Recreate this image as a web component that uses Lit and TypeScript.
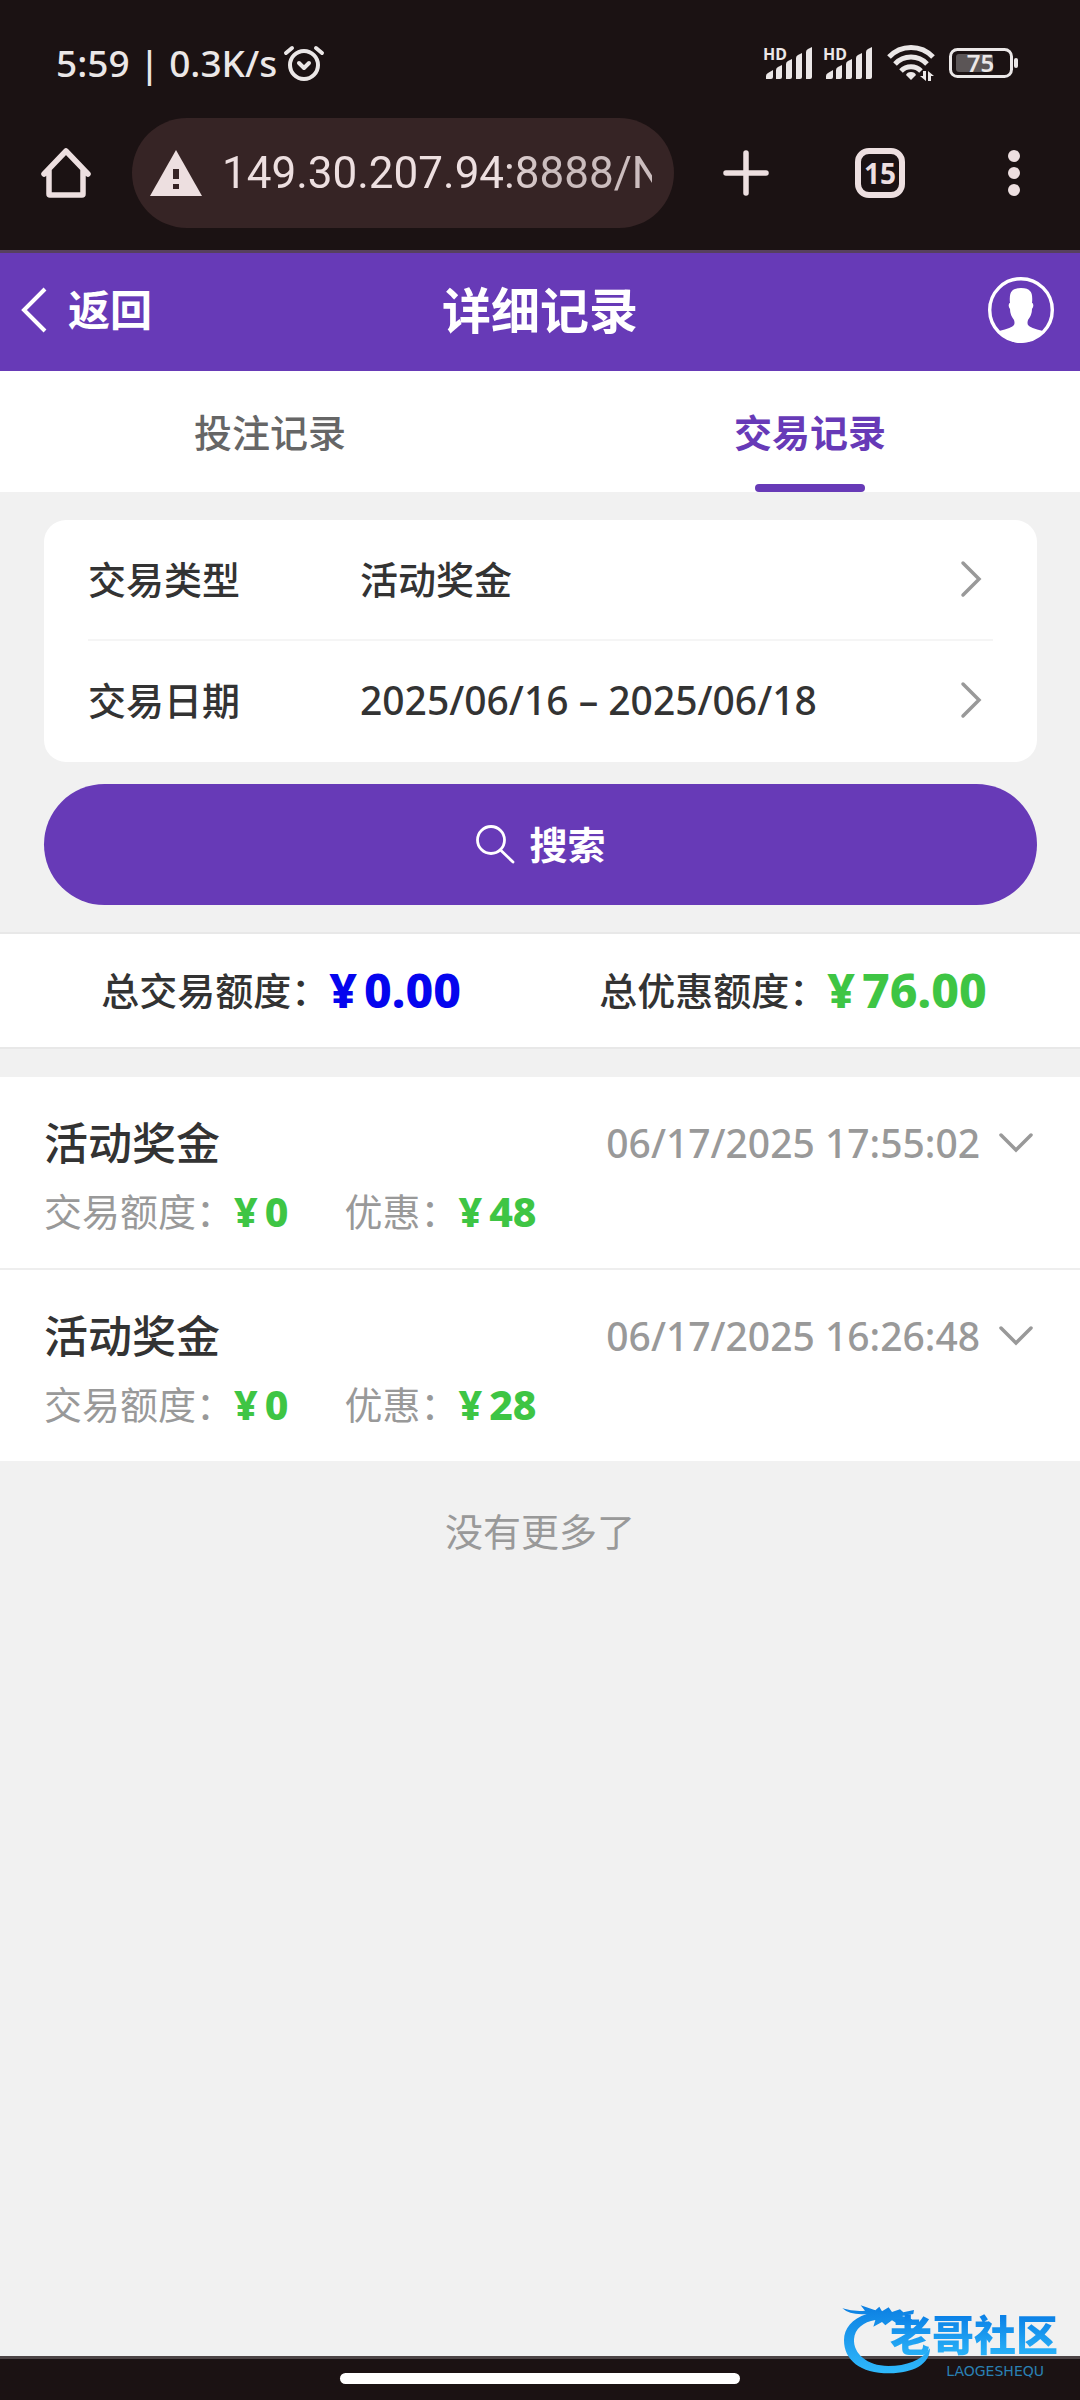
import { LitElement, html, css, svg } from "lit";
import { customElement, state } from "lit/decorators.js";

interface BonusRecord {
  title: string;
  time: string;
  amount: string;
  bonus: string;
}

const RECORDS: BonusRecord[] = [
  { title: "活动奖金", time: "06/17/2025 17:55:02", amount: "0", bonus: "48" },
  { title: "活动奖金", time: "06/17/2025 16:26:48", amount: "0", bonus: "28" },
];

const TABS = ["投注记录", "交易记录"];

const signalBars = svg`
  <path d="M3 33v-3q0-2 2-3l5-3v7q0 2-2 2z" />
  <path d="M13 33v-9q0-2 2-3l4-2v12q0 2-2 2z" />
  <path d="M23 33v-15q0-2 2-3l4-2v18q0 2-2 2z" />
  <path d="M33 33v-21q0-2 2-3l4-2v24q0 2-2 2z" />
  <path d="M43 33v-27q0-2 2-3l4-2v30q0 2-2 2z" />`;

@customElement("status-bar")
export class StatusBar extends LitElement {
  static styles = css`
    :host {
      display: flex;
      align-items: center;
      justify-content: space-between;
      height: 118px;
      padding: 8px 61px 0 56px;
      box-sizing: border-box;
      color: #ebe7e7;
      font: 500 37px/48px "Noto Sans", "Noto Sans CJK SC", sans-serif;
    }
    .left,
    .right {
      display: flex;
      align-items: center;
    }
    .left {
      gap: 6px;
    }
    .right {
      gap: 8px;
    }
    svg {
      display: block;
      fill: currentColor;
    }
    .signal {
      display: grid;
    }
    .signal > * {
      grid-area: 1 / 1;
    }
    .hd {
      font: 700 16px/16px "Noto Sans", sans-serif;
      align-self: start;
    }
    .wifi {
      margin: 0 6px 0 4px;
    }
    .battery {
      display: grid;
      align-items: center;
      justify-items: center;
    }
    .battery > * {
      grid-area: 1 / 1;
    }
    .level {
      font: 600 24px/30px "Noto Sans", sans-serif;
      padding-right: 7px;
    }
  `;

  private signal() {
    return html`<span class="signal">
      <svg width="52" height="34" viewBox="0 0 52 34" aria-hidden="true">${signalBars}</svg>
      <span class="hd">HD</span>
    </span>`;
  }

  render() {
    return html`
      <div class="left">
        <span>5:59 | 0.3K/s</span>
        <svg width="42" height="38" viewBox="0 0 42 38" aria-hidden="true">
          <g fill="none" stroke="currentColor" stroke-linecap="round" stroke-linejoin="round">
            <circle cx="21" cy="21" r="14" stroke-width="4" />
            <path d="M3 9l6-5M39 9l-6-5" stroke-width="4" />
            <path d="M16 19l5 5 5-5" stroke-width="4" />
          </g>
        </svg>
      </div>
      <div class="right">
        ${this.signal()} ${this.signal()}
        <svg class="wifi" width="48" height="38" viewBox="0 0 48 38" aria-hidden="true">
          <g fill="none" stroke="currentColor" stroke-width="5" stroke-linecap="butt">
            <path d="M2 13a30 30 0 0 1 44 0" />
            <path d="M8 20a22 22 0 0 1 32 0" />
            <path d="M14 27a14 14 0 0 1 20 0" />
          </g>
          <path d="M24 28q4 0 5 3l-5 5-5-5q1-3 5-3z" />
          <path d="M36 27h3v10l-6-5h3zM41 37V27l6 5h-3v5z" />
        </svg>
        <span class="battery">
          <svg width="70" height="32" viewBox="0 0 70 32" aria-hidden="true">
            <rect x="1.5" y="2.5" width="61" height="27" rx="7" fill="none" stroke="currentColor" stroke-width="3" />
            <rect x="7" y="7" width="37" height="18" rx="3" fill="#5b5556" />
            <rect x="65" y="11" width="4" height="10" rx="2" />
          </svg>
          <span class="level">75</span>
        </span>
      </div>
    `;
  }
}

@customElement("browser-bar")
export class BrowserBar extends LitElement {
  static styles = css`
    :host {
      display: flex;
      align-items: center;
      height: 110px;
      padding: 0 36px 22px 36px;
      color: #eddfe0;
    }
    button {
      display: grid;
      place-items: center;
      width: 60px;
      height: 60px;
      padding: 0;
      border: 0;
      background: none;
      color: inherit;
    }
    button > * {
      grid-area: 1 / 1;
    }
    svg {
      display: block;
      flex: none;
    }
    .address {
      flex: 1;
      min-width: 0;
      display: flex;
      align-items: center;
      gap: 20px;
      height: 110px;
      margin: 0 42px 0 36px;
      padding: 0 22px 0 18px;
      border-radius: 55px;
      background: #362425;
      box-sizing: border-box;
    }
    .url {
      flex: 1;
      min-width: 0;
      padding: 0;
      border: 0;
      outline: 0;
      background: none;
      color: inherit;
      font: 400 44px/60px Roboto, "Noto Sans", sans-serif;
      mask-image: linear-gradient(90deg, #000 276px, rgba(0, 0, 0, 0.82) 320px);
    }
    .actions {
      display: flex;
      gap: 74px;
    }
    .count {
      font: 700 28px/32px "Noto Sans", sans-serif;
    }
  `;

  render() {
    return html`
      <button aria-label="主页">
        <svg width="52" height="52" viewBox="0 0 52 52" fill="none" stroke="currentColor" stroke-width="5.5" stroke-linejoin="round" stroke-linecap="round" aria-hidden="true">
          <path d="M4 27L26 4l22 23M9 23v24q0 1 1 1h32q1 0 1-1V23" />
        </svg>
      </button>
      <div class="address">
        <svg width="52" height="46" viewBox="0 0 52 46" aria-hidden="true">
          <path d="M26 0l26 46H0z" fill="currentColor" />
          <path d="M23 19h6v10h-6zM23 34h6v5h-6z" fill="#362425" />
        </svg>
        <input class="url" aria-label="网址" value="149.30.207.94:8888/N" readonly />
      </div>
      <div class="actions">
        <button aria-label="新标签页">
          <svg width="46" height="46" viewBox="0 0 46 46" stroke="currentColor" stroke-width="5.5" stroke-linecap="round" aria-hidden="true">
            <path d="M23 3v40M3 23h40" />
          </svg>
        </button>
        <button>
          <svg width="50" height="50" viewBox="0 0 50 50" aria-hidden="true">
            <rect x="3" y="3" width="44" height="44" rx="11" fill="none" stroke="currentColor" stroke-width="6" />
          </svg>
          <span class="count">15</span>
        </button>
        <button aria-label="更多">
          <svg width="12" height="46" viewBox="0 0 12 46" fill="currentColor" aria-hidden="true">
            <circle cx="6" cy="6" r="6" />
            <circle cx="6" cy="23" r="6" />
            <circle cx="6" cy="40" r="6" />
          </svg>
        </button>
      </div>
    `;
  }
}

@customElement("forum-mark")
export class ForumMark extends LitElement {
  static styles = css`
    :host {
      position: absolute;
      right: 14px;
      bottom: 24px;
      display: grid;
      width: 224px;
      height: 78px;
    }
    svg,
    .words {
      grid-area: 1 / 1;
    }
    .words {
      display: flex;
      flex-direction: column;
      align-items: flex-end;
      padding: 4px 8px 0 0;
      text-align: right;
    }
    .name {
      font: 900 42px/61px "Noto Sans CJK SC", sans-serif;
      color: transparent;
      background: linear-gradient(#0a7fe6 20%, #2bb4f8 90%);
      background-clip: text;
    }
    .latin {
      padding-right: 14px;
      font: 400 14px/16px "DejaVu Sans", sans-serif;
      color: #2a80b4;
    }
  `;

  render() {
    return html`
      <svg width="224" height="78" viewBox="126 84 672 234" aria-hidden="true">
        <defs>
          <linearGradient id="wave" x1="0" y1="0" x2="0" y2="1">
            <stop offset="0" stop-color="#0c7fe2" />
            <stop offset="1" stop-color="#2fb9fb" />
          </linearGradient>
        </defs>
        <path
          fill="url(#wave)"
          d="M200 132Q150 136 127 115Q160 125 195 122L182 106L226 121L238 110L246 124L266 112L276 126L300 118L310 127L342 120L340 132L306 138L336 148L332 160L300 150L290 160L276 151L256 166L246 156L220 170L226 150C190 156 164 176 162 208C160 250 200 288 265 288C320 288 364 272 390 235C390 282 340 310 268 310C180 310 132 270 132 210C132 176 156 146 200 132Z"
        />
      </svg>
      <div class="words">
        <span class="name">老哥社区</span>
        <span class="latin">LAOGESHEQU</span>
      </div>
    `;
  }
}

@customElement("app-root")
export class AppRoot extends LitElement {
  static styles = css`
    :host {
      display: flex;
      flex-direction: column;
      position: relative;
      min-height: 100vh;
      background: #f1f1f1;
      color: #333;
      font: 500 38px/56px "Noto Sans", "Noto Sans CJK SC", sans-serif;
    }
    button {
      margin: 0;
      padding: 0;
      border: 0;
      background: none;
      color: inherit;
      font: inherit;
      text-align: left;
    }
    svg {
      display: block;
      flex: none;
    }
    .chrome {
      background: #1b1213;
      border-bottom: 3px solid #57405e;
    }
    .header {
      display: grid;
      grid-template-columns: 1fr auto 1fr;
      align-items: center;
      height: 118px;
      padding: 0 20px 4px;
      background: #673ab7;
      color: #fff;
      box-sizing: border-box;
    }
    .back {
      display: flex;
      align-items: center;
      gap: 20px;
      font-size: 42px;
      font-weight: 700;
    }
    .title {
      margin: 0;
      font-size: 49px;
      font-weight: 700;
    }
    .user {
      justify-self: end;
      margin-right: 6px;
    }
    .tabs {
      display: grid;
      grid-template-columns: 1fr 1fr;
      background: #fff;
    }
    .tab {
      display: flex;
      flex-direction: column;
      align-items: center;
      height: 121px;
      padding-top: 33px;
      color: #666;
      box-sizing: border-box;
    }
    .tab.active {
      color: #673ab7;
      font-weight: 700;
    }
    .tab.active::after {
      content: "";
      width: 110px;
      height: 8px;
      margin-top: auto;
      border-radius: 4px;
      background: #673ab7;
    }
    .search {
      display: grid;
      gap: 22px;
      padding: 28px 43px 27px 44px;
    }
    .filters {
      padding: 0 44px;
      border-radius: 22px;
      background: #fff;
    }
    .filter {
      display: grid;
      grid-template-columns: 272px 1fr auto;
      align-items: center;
      width: 100%;
      height: 121px;
      padding: 0 11px 4px 0;
      box-sizing: border-box;
    }
    .filter:first-child {
      padding-bottom: 2px;
      border-bottom: 2px solid #f5f5f5;
    }
    .number {
      font-size: 39px;
    }
    .submit {
      display: flex;
      align-items: center;
      justify-content: center;
      gap: 14px;
      height: 121px;
      padding-bottom: 2px;
      border-radius: 61px;
      background: #673ab7;
      color: #fff;
      font-weight: 700;
      box-sizing: border-box;
    }
    .totals {
      display: flex;
      justify-content: space-around;
      margin: 0 0 28px;
      padding: 28px 24px 29px 32px;
      border: solid #e8e8e8;
      border-width: 2px 0;
      background: #fff;
    }
    .pair {
      display: flex;
      align-items: center;
    }
    dl,
    dd {
      margin: 0;
    }
    .money {
      display: flex;
      gap: 7px;
      font-weight: 800;
      color: #3ec544;
      font-size: 41px;
    }
    .totals .money {
      font-size: 48px;
    }
    .money.spent {
      color: #0505ee;
    }
    .records {
      margin: 0;
      padding: 0;
      list-style: none;
      background: #fff;
    }
    .record {
      display: grid;
      gap: 12px;
      width: 100%;
      padding: 38px 44px 29px;
      box-sizing: border-box;
    }
    .item + .item {
      border-top: 2px solid #eee;
    }
    .top {
      display: flex;
      align-items: center;
      justify-content: space-between;
    }
    .kind {
      font-size: 44px;
    }
    .time {
      display: flex;
      align-items: center;
      gap: 18px;
      padding-right: 2px;
      color: #999;
    }
    .detail {
      display: flex;
      gap: 56px;
      color: #999;
      font-weight: 400;
    }
    .end {
      margin: 0;
      padding: 42px 0;
      text-align: center;
      color: #999;
      font-weight: 400;
    }
    .nav {
      display: flex;
      justify-content: center;
      height: 27px;
      margin-top: auto;
      padding-top: 14px;
      border-top: 3px solid #4c4445;
      background: #1b1213;
    }
    .handle {
      width: 37%;
      height: 11px;
      border-radius: 6px;
      background: #fff;
    }
  `;

  @state() private tab = 1;

  private next() {
    return html`<svg width="22" height="38" viewBox="0 0 22 38" fill="none" stroke="#999" stroke-width="3.5" stroke-linecap="round" aria-hidden="true">
      <path d="M3 3l16 16L3 35" />
    </svg>`;
  }

  private record(r: BonusRecord) {
    return html`<li class="item">
      <button class="record" aria-expanded="false">
        <span class="top">
          <span class="kind">${r.title}</span>
          <span class="time">
            <span class="number">${r.time}</span>
            <svg width="36" height="22" viewBox="0 0 36 22" fill="none" stroke="#999" stroke-width="3.5" stroke-linecap="round" aria-hidden="true">
              <path d="M3 3l15 15L33 3" />
            </svg>
          </span>
        </span>
        <span class="detail">
          <span class="pair">交易额度：<span class="money"><span>¥</span><span>${r.amount}</span></span></span>
          <span class="pair">优惠：<span class="money"><span>¥</span><span>${r.bonus}</span></span></span>
        </span>
      </button>
    </li>`;
  }

  render() {
    return html`
      <div class="chrome">
        <status-bar></status-bar>
        <browser-bar></browser-bar>
      </div>
      <header class="header">
        <button class="back">
          <svg width="28" height="46" viewBox="0 0 28 46" fill="none" stroke="#fff" stroke-width="4" aria-hidden="true">
            <path d="M25 2L4 23l21 21" />
          </svg>
          返回
        </button>
        <h1 class="title">详细记录</h1>
        <button class="user" aria-label="我的">
          <svg width="66" height="66" viewBox="0 0 66 66" aria-hidden="true">
            <circle cx="33" cy="33" r="31.3" fill="none" stroke="#fff" stroke-width="3.4" />
            <path fill="#fff" d="M11 54q13-3 15-6 1-2 0-5-4-5-4-11-2-3-1-5 0-1 1-1-1-9 2-12 2-3 9-3t9 3q3 3 2 12 1 0 1 1 1 2-1 5 0 6-4 11-1 3 0 5 2 3 15 6Q46 66 33 66T11 54z" />
          </svg>
        </button>
      </header>
      <div class="tabs" role="tablist">
        ${TABS.map(
          (name, i) => html`<button
            class="tab ${i === this.tab ? "active" : ""}"
            role="tab"
            aria-selected=${i === this.tab ? "true" : "false"}
            @click=${() => (this.tab = i)}
          >${name}</button>`,
        )}
      </div>
      <section class="search">
        <div class="filters">
          <button class="filter"><span>交易类型</span><span>活动奖金</span>${this.next()}</button>
          <button class="filter"><span>交易日期</span><span class="number">2025/06/16 – 2025/06/18</span>${this.next()}</button>
        </div>
        <button class="submit">
          <svg width="40" height="40" viewBox="0 0 40 40" fill="none" stroke="#fff" stroke-width="2.8" stroke-linecap="round" aria-hidden="true">
            <circle cx="16" cy="16" r="13.5" />
            <path d="M25.5 26L38 38" />
          </svg>
          搜索
        </button>
      </section>
      <dl class="totals">
        <div class="pair"><dt>总交易额度：</dt><dd class="money spent"><span>¥</span><span>0.00</span></dd></div>
        <div class="pair"><dt>总优惠额度：</dt><dd class="money"><span>¥</span><span>76.00</span></dd></div>
      </dl>
      <ul class="records">
        ${RECORDS.map((r) => this.record(r))}
      </ul>
      <p class="end">没有更多了</p>
      <div class="nav"><div class="handle"></div></div>
      <forum-mark></forum-mark>
    `;
  }
}
